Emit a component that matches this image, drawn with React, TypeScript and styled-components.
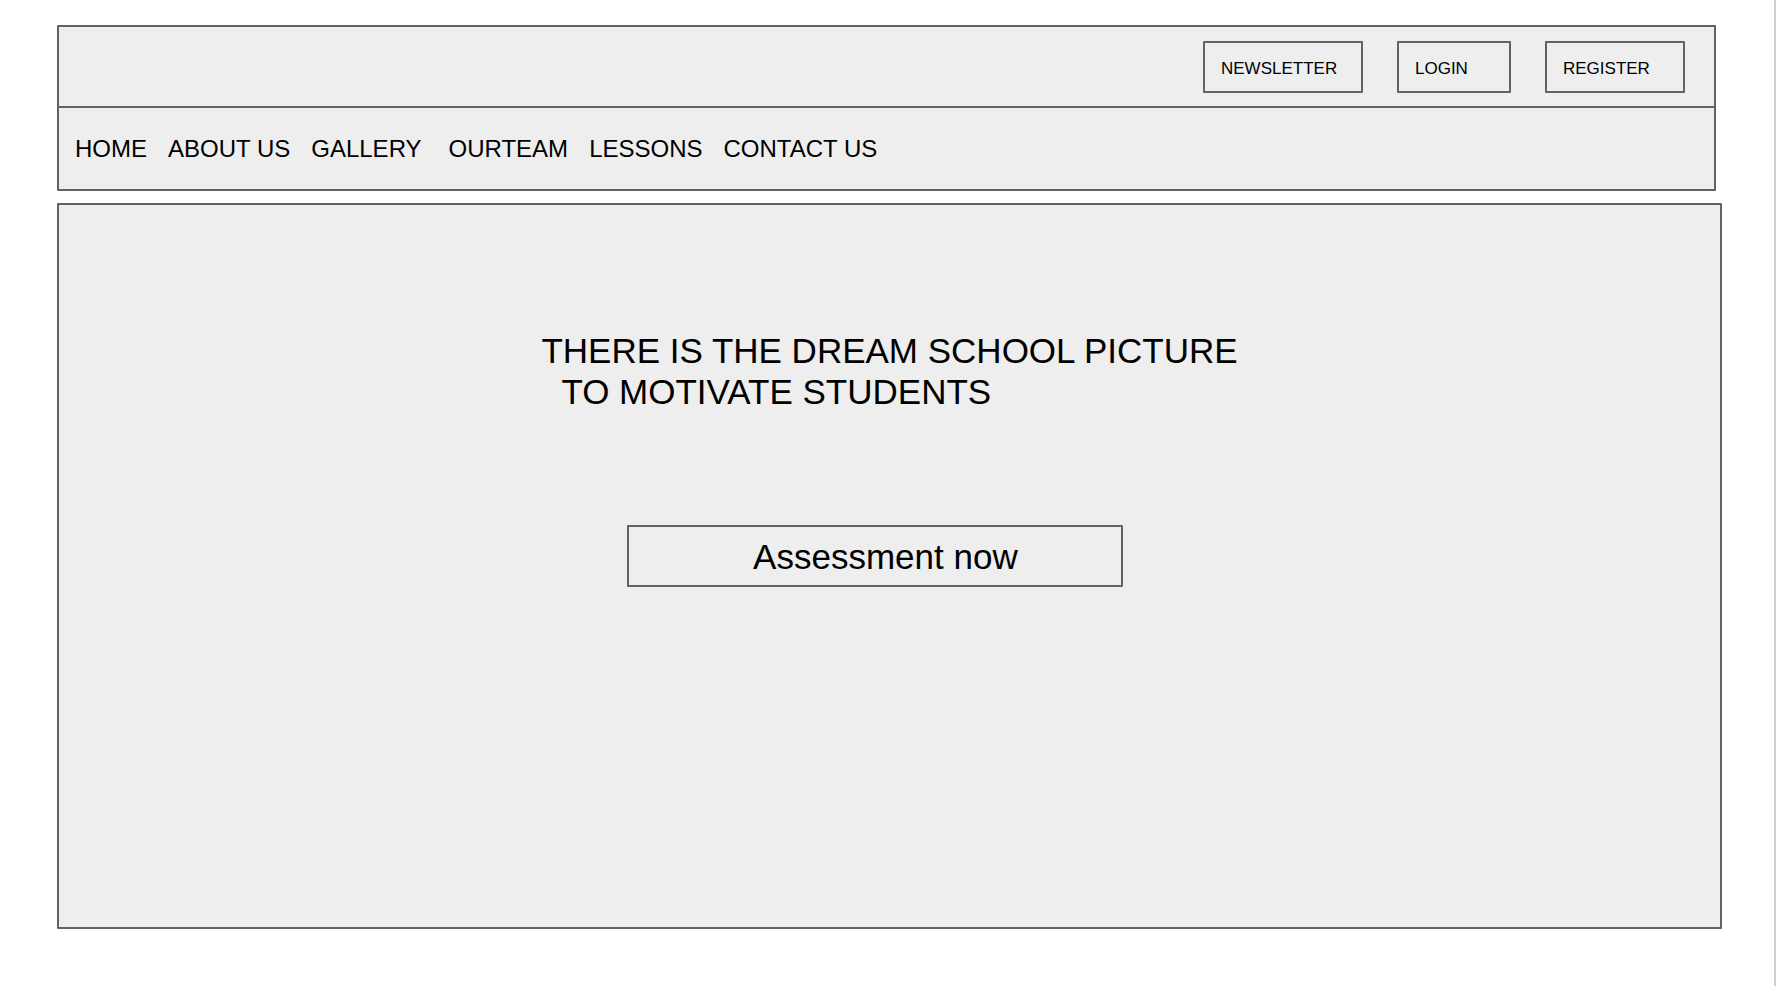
import React from "react";
import styled, { createGlobalStyle } from "styled-components";

const line = "#636363";
const fill = "#eeeeee";

const GlobalStyle = createGlobalStyle`
  *, *::before, *::after { box-sizing: border-box; }
  body {
    margin: 0;
    background: #ffffff;
    color: #000000;
    font-family: "Liberation Sans", Arial, Helvetica, sans-serif;
  }
`;

const Page = styled.div`
  display: flex;
  flex-direction: column;
  gap: 12px;
  min-height: 100vh;
  padding: 25px 52px 57px 57px;
  border-right: 2px solid #cfcfcf;
`;

const Header = styled.header`
  margin-right: 6px;
  border: 2px solid ${line};
  border-radius: 1px;
  background: ${fill};
`;

const AccountBar = styled.div`
  display: flex;
  justify-content: flex-end;
  gap: 34px;
  padding: 14px 29px 13px;
  border-bottom: 2px solid ${line};
`;

const AccountButton = styled.button<{ $width: number }>`
  width: ${({ $width }) => $width}px;
  height: 52px;
  padding: 3px 16px 0;
  border: 2px solid ${line};
  border-radius: 1px;
  background: ${fill};
  color: inherit;
  font-family: inherit;
  font-size: 17px;
  line-height: 20px;
  text-align: left;
  cursor: pointer;
`;

const Nav = styled.nav`
  display: flex;
  flex-wrap: wrap;
  align-items: center;
  gap: 21px;
  min-height: 81px;
  padding: 0 16px;
`;

const NavGroup = styled.div`
  display: flex;
  gap: 21px;
  margin-right: 6px;
`;

const NavLink = styled.a`
  color: inherit;
  font-size: 24px;
  line-height: 28px;
  text-decoration: none;
`;

const Hero = styled.main`
  display: flex;
  flex: 1;
  flex-direction: column;
  align-items: center;
  padding: 125px 24px;
  border: 2px solid ${line};
  border-radius: 1px;
  background: ${fill};
`;

const HeroContent = styled.div`
  max-width: 100%;
`;

const Title = styled.h1`
  margin: 0 0 113px;
  font-size: 35px;
  font-weight: 400;
  line-height: 41px;
`;

const TitleLine = styled.span<{ $indent?: boolean }>`
  display: block;
  padding-left: ${({ $indent }) => ($indent ? 20 : 0)}px;
`;

const AssessmentButton = styled.button`
  width: 496px;
  max-width: 100%;
  height: 62px;
  margin-left: 86px;
  padding: 0 0 0 20px;
  border: 2px solid ${line};
  border-radius: 1px;
  background: ${fill};
  color: inherit;
  font-family: inherit;
  font-size: 35px;
  line-height: 41px;
  cursor: pointer;
`;

export default function App() {
  return (
    <>
      <GlobalStyle />
      <Page>
        <Header>
          <AccountBar>
            <AccountButton type="button" $width={160}>NEWSLETTER</AccountButton>
            <AccountButton type="button" $width={114}>LOGIN</AccountButton>
            <AccountButton type="button" $width={140}>REGISTER</AccountButton>
          </AccountBar>
          <Nav aria-label="Main">
            <NavGroup>
              <NavLink href="#home">HOME</NavLink>
              <NavLink href="#about">ABOUT US</NavLink>
              <NavLink href="#gallery">GALLERY</NavLink>
            </NavGroup>
            <NavLink href="#team">OURTEAM</NavLink>
            <NavLink href="#lessons">LESSONS</NavLink>
            <NavLink href="#contact">CONTACT US</NavLink>
          </Nav>
        </Header>
        <Hero>
          <HeroContent>
            <Title>
              <TitleLine>THERE IS THE DREAM SCHOOL PICTURE</TitleLine>
              <TitleLine $indent>TO MOTIVATE STUDENTS</TitleLine>
            </Title>
            <AssessmentButton type="button">Assessment now</AssessmentButton>
          </HeroContent>
        </Hero>
      </Page>
    </>
  );
}
